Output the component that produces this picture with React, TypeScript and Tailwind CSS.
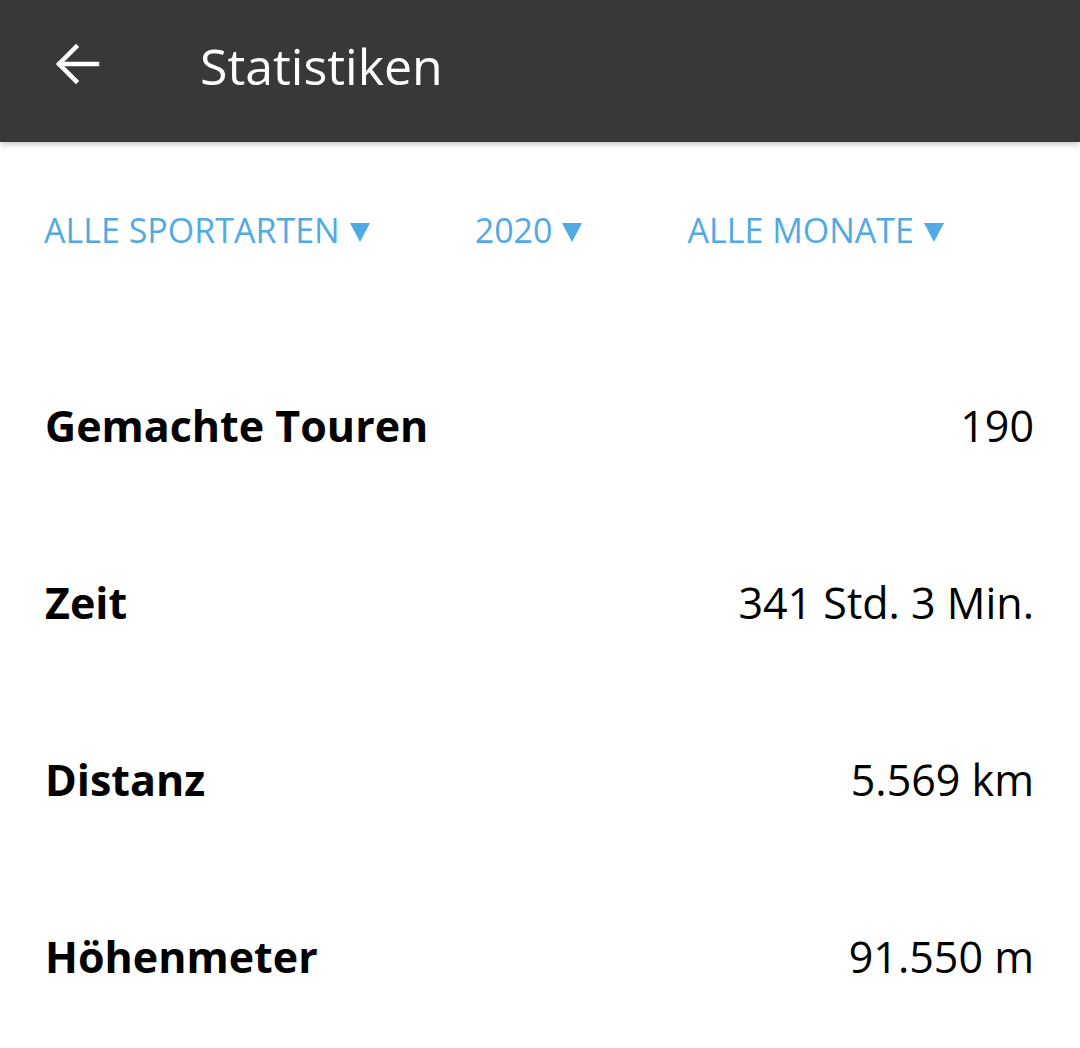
import React from 'react';

const filters = ['ALLE SPORTARTEN', '2020', 'ALLE MONATE'];

const stats = [
  { label: 'Gemachte Touren', value: '190' },
  { label: 'Zeit', value: '341 Std. 3 Min.' },
  { label: 'Distanz', value: '5.569 km' },
  { label: 'Höhenmeter', value: '91.550 m' },
];

function Caret() {
  return (
    <svg width="20" height="20" viewBox="0 0 20 20" className="ml-[10px] mt-[4px]">
      <path d="M0 1 H20 L10 20 Z" fill="#52aae3" />
    </svg>
  );
}

export default function App() {
  return (
    <div className="w-[1080px] h-[1048px] bg-white overflow-hidden" style={{ fontFamily: '"Open Sans", "Noto Sans", sans-serif' }}>
      <header className="h-[142px] bg-[#383838] flex items-center pb-[10px] shadow-[0_2px_6px_rgba(0,0,0,0.25)] relative z-10">
        <svg width="48" height="48" viewBox="0 0 48 48" className="ml-[53px]" fill="none" stroke="white" strokeWidth="4.5" strokeLinecap="square">
          <path d="M44 22 H7" />
          <path d="M23 5 L6 22 L23 39" />
        </svg>
        <h1 className="ml-[99px] text-[50px] text-white leading-none">Statistiken</h1>
      </header>

      <div className="flex items-center gap-[105px] pl-[44px] mt-[58px] h-[60px]">
        {filters.map((f) => (
          <div key={f} className="flex items-center text-[#52aae3] text-[34px] leading-none">
            <span>{f}</span>
            <Caret />
          </div>
        ))}
      </div>

      <div className="mt-[78px] pl-[45px] pr-[46px]">
        {stats.map((s) => (
          <div key={s.label} className="h-[177px] flex items-center justify-between text-black">
            <span className="text-[43px] font-bold">{s.label}</span>
            <span className="text-[43px]">{s.value}</span>
          </div>
        ))}
      </div>
    </div>
  );
}
